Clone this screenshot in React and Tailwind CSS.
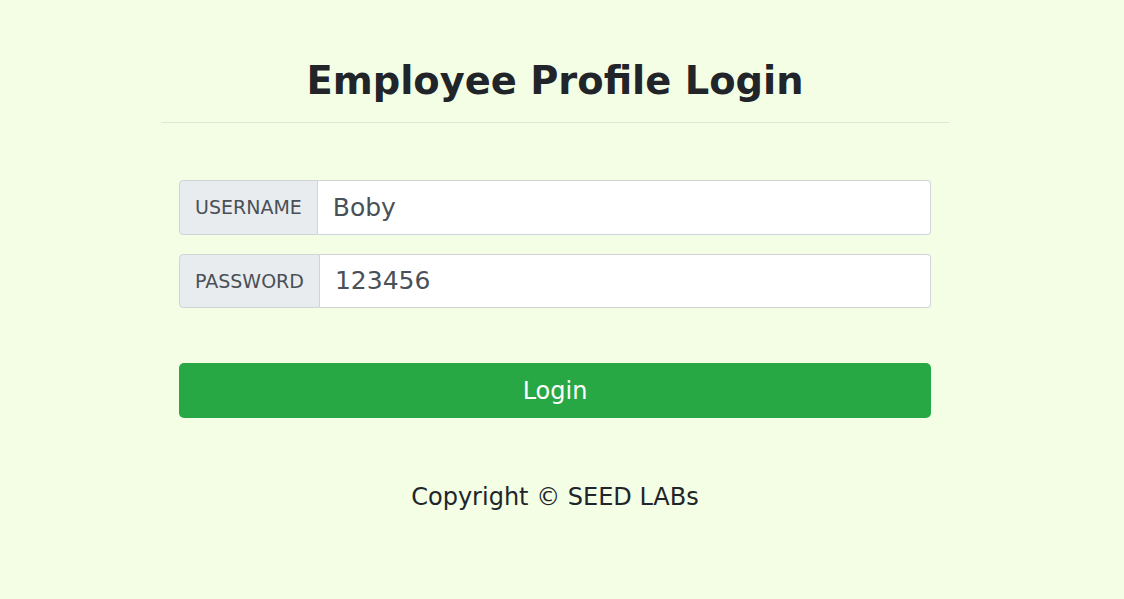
import React, { useState } from 'react';

const LoginPage = () => {
  const [username, setUsername] = useState('Boby');
  const [password, setPassword] = useState('123456');

  return (
    <div className="min-h-screen bg-[#f3fee5] font-['DejaVu_Sans',sans-serif] text-[#212529]">
      <div className="w-[788px] ml-[161px] pt-[56px]">
        <h2 className="text-[38.4px] font-bold text-center leading-[50px] text-[#212529]">
          Employee Profile Login
        </h2>
        <hr className="mt-[16px] border-t border-[#dfe6d6]" />

        <div className="px-[18px] pt-[57px]">
          {/* Username */}
          <div className="flex h-[55px] w-[752px]">
            <span className="flex items-center px-[15px] bg-[#e9ecef] border border-[#ced4da] rounded-l-[4px] text-[19px] text-[#495057]">
              USERNAME
            </span>
            <input
              value={username}
              onChange={(e) => setUsername(e.target.value)}
              className="flex-1 bg-white border border-l-0 border-[#ced4da] rounded-r-[4px] px-[15px] text-[25px] text-[#495057] outline-none"
            />
          </div>

          {/* Password */}
          <div className="flex h-[54px] w-[752px] mt-[19px]">
            <span className="flex items-center px-[15px] bg-[#e9ecef] border border-[#ced4da] rounded-l-[4px] text-[19px] text-[#495057]">
              PASSWORD
            </span>
            <input
              value={password}
              onChange={(e) => setPassword(e.target.value)}
              className="flex-1 bg-white border border-l-0 border-[#ced4da] rounded-r-[4px] px-[15px] text-[25px] text-[#495057] outline-none"
            />
          </div>

          <button className="mt-[55px] w-[752px] h-[55px] bg-[#28a745] text-white text-[24px] rounded-[5px]">
            Login
          </button>
        </div>

        <p className="mt-[61px] text-center text-[24px] leading-[36px] text-[#212529]">
          Copyright © SEED LABs
        </p>
      </div>
    </div>
  );
};

export default LoginPage;
